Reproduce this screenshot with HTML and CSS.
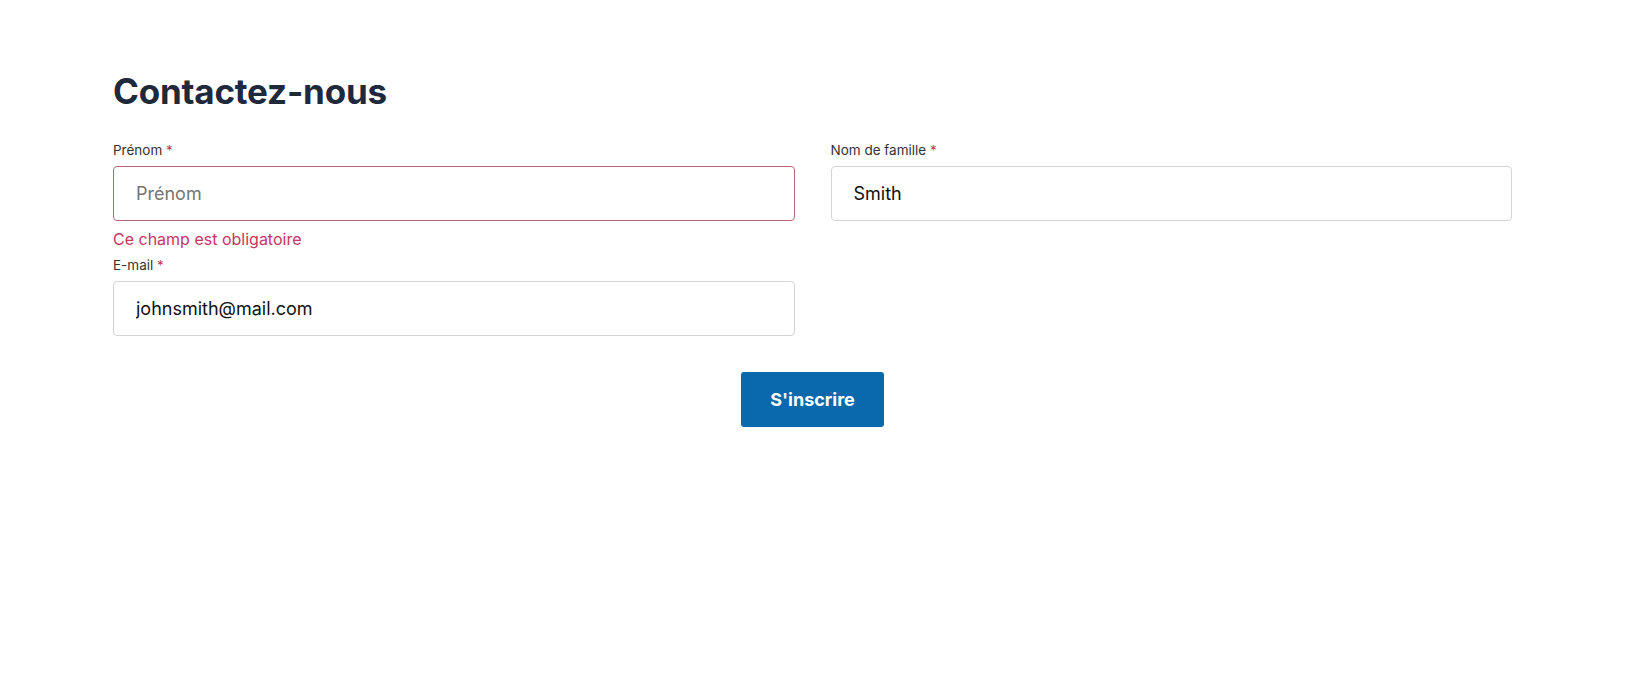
FILE: index.html
```html
<!DOCTYPE html>
<html lang="fr">
    <head>
        <meta charset="UTF-8">
        <meta name="viewport" content="width=device-width, initial-scale=1.0">
        <title>Contactez-nous</title>

        <link rel="stylesheet" href="styles.css">
    </head>
    <body>
        <div class="page">

            <h1 class="titre">Contactez-nous</h1>

            <form class="formulario">

                <div class="campos">

                    <div class="campo">
                        <label for="prenom">Prénom <span class="obrigatorio">*</span></label>
                        <input id="prenom" class="invalido" type="text" placeholder="Prénom">
                        <span class="erro">Ce champ est obligatoire</span>
                    </div>

                    <div class="campo">
                        <label for="nom">Nom de famille <span class="obrigatorio">*</span></label>
                        <input id="nom" type="text" placeholder="Nom de famille" value="Smith">
                    </div>

                    <div class="campo">
                        <label for="email">E-mail <span class="obrigatorio">*</span></label>
                        <input id="email" type="text" placeholder="E-mail" value="johnsmith@mail.com">
                    </div>

                </div>

                <div class="acoes">
                    <button type="button" class="botao">S'inscrire</button>
                </div>

            </form>

        </div>
    </body>
</html>
```

FILE: styles.css
```css
body{
    margin: 0;
    background-color: #ffffff;
    font-family: Inter, "Noto Sans", sans-serif;
}
.page{
    padding: 69px 0 0 113px;
    width: 1399px;
}
.titre{
    margin: 0 0 27px 0;
    font-size: 35px;
    line-height: 44px;
    font-weight: 700;
    color: #1e293b;
    letter-spacing: -0.2px;
}
.campos{
    display: grid;
    grid-template-columns: 1fr 1fr;
    column-gap: 36px;
    align-items: start;
}
.campo{
    display: flex;
    flex-direction: column;
}
.campo label{
    font-size: 13.5px;
    line-height: 20px;
    color: #333333;
    margin-bottom: 6px;
}
.obrigatorio{
    color: #c9355f;
}
.campo input{
    box-sizing: border-box;
    height: 55px;
    padding: 0 22px;
    border: 1px solid #d4d4d4;
    border-radius: 4px;
    font-family: Inter, "Noto Sans", sans-serif;
    font-size: 18px;
    color: #111111;
    background-color: #ffffff;
    outline: none;
}
.campo input::placeholder{
    color: #757575;
}
.campo input.invalido{
    border-color: #b86578;
}
.erro{
    margin-top: 6px;
    font-size: 16px;
    line-height: 24px;
    color: #c9355f;
}
.campo + .campo + .campo{
    margin-top: 4px;
}
.acoes{
    display: flex;
    justify-content: center;
    margin-top: 36px;
}
.botao{
    width: 143px;
    height: 55px;
    border: 0;
    border-radius: 3px;
    background-color: #0a69ad;
    color: #ffffff;
    font-family: Inter, "Noto Sans", sans-serif;
    font-size: 18px;
    font-weight: 700;
}
```
